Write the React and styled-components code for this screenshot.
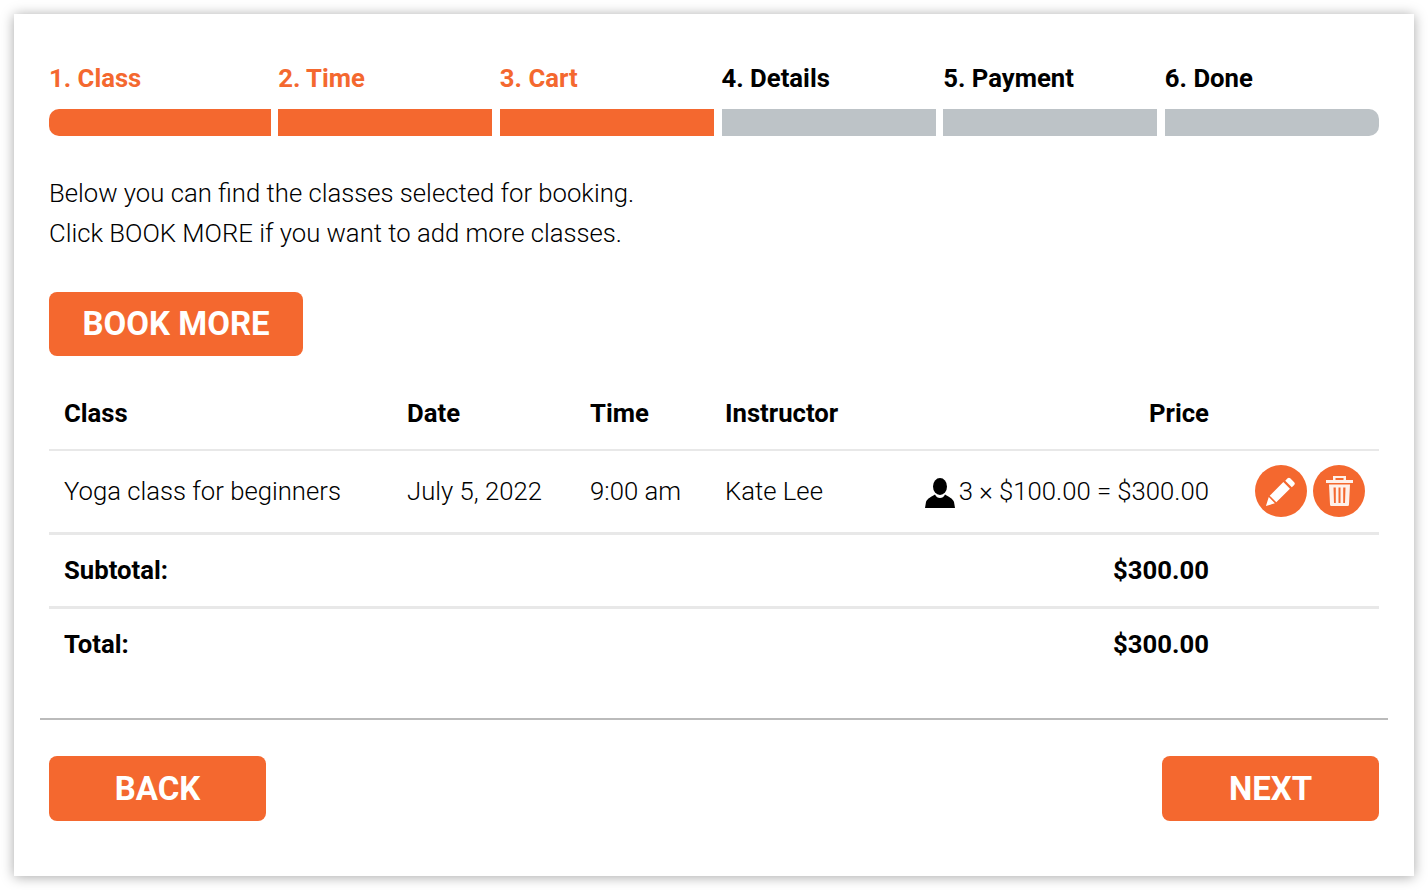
import React from "react";
import styled, { createGlobalStyle } from "styled-components";

const ORANGE = "#f4682f";

const GlobalStyle = createGlobalStyle`
  html, body {
    margin: 0;
    background: #fff;
  }
  body {
    font-family: Roboto, "Liberation Sans", sans-serif;
    color: #000;
  }
`;

const Card = styled.div`
  box-sizing: border-box;
  width: 1400px;
  height: 862px;
  margin: 14px;
  padding: 47px 35px 0;
  background: #fff;
  box-shadow: 0 1px 12px rgba(0, 0, 0, 0.35);
`;

const Steps = styled.div`
  display: grid;
  grid-template-columns: repeat(6, 1fr);
`;

const Step = styled.div`
  padding-left: ${(p) => (p.$first ? 0 : "7.5px")};
`;

const StepLabel = styled.div`
  font-size: 25.7px;
  line-height: 34px;
  font-weight: 700;
  color: ${(p) => (p.$active ? ORANGE : "#000")};
`;

const StepBar = styled.div`
  height: 27px;
  margin-top: 14px;
  background: ${(p) => (p.$active ? ORANGE : "#bdc3c7")};
  border-radius: ${(p) => (p.$first ? "10px 0 0 10px" : p.$last ? "0 10px 10px 0" : 0)};
`;

const Intro = styled.p`
  margin: 37px 0 0;
  font-size: 25.7px;
  line-height: 40px;
  font-weight: 300;
`;

const Button = styled.button`
  display: block;
  box-sizing: border-box;
  height: ${(p) => p.$height || "64px"};
  width: ${(p) => p.$width || "auto"};
  padding: 0 33.500px;
  border: 0;
  border-radius: 8px;
  background: ${ORANGE};
  color: #fff;
  font-family: inherit;
  font-size: 33px;
  font-weight: 700;
`;

const MoreButton = styled(Button)`
  margin-top: 38.500px;
`;

const Table = styled.table`
  width: 100%;
  margin-top: 21px;
  table-layout: fixed;
  border-collapse: collapse;
  font-size: 25.7px;
`;

const Row = styled.tr`
  height: ${(p) => p.$height};
  border-bottom: ${(p) => p.$border || "0"};
`;

const Head = styled.th`
  padding: 0 15px;
  font-weight: 700;
  text-align: ${(p) => p.$align || "left"};
`;

const Cell = styled.td`
  padding: 0 15px ${(p) => p.$lift || 0} 15px;
  font-weight: ${(p) => (p.$bold ? 700 : 300)};
  text-align: ${(p) => p.$align || "left"};
  white-space: nowrap;
`;

const ActionCell = styled.td`
  padding: 0 14px 0 0;
`;

const Actions = styled.div`
  display: flex;
  justify-content: flex-end;
  gap: 6px;
`;

const RoundButton = styled.div`
  flex: none;
  width: 52px;
  height: 52px;
  border-radius: 50%;
  background: ${ORANGE};
  display: flex;
  align-items: center;
  justify-content: center;
`;

const PersonIcon = styled.svg`
  width: 30px;
  height: 30px;
  margin: 0 4px -2px 0;
  vertical-align: -6px;
`;

const Divider = styled.div`
  height: 2px;
  margin: 38px -9px 0;
  background: #bbb;
`;

const Footer = styled.div`
  display: flex;
  justify-content: space-between;
  margin-top: 36px;
`;

const steps = ["1. Class", "2. Time", "3. Cart", "4. Details", "5. Payment", "6. Done"];

function App() {
  return (
    <>
      <GlobalStyle />
      <Card>
        <Steps>
          {steps.map((s, i) => (
            <Step key={s} $first={i === 0}>
              <StepLabel $active={i < 3}>{s}</StepLabel>
              <StepBar $active={i < 3} $first={i === 0} $last={i === 5} />
            </Step>
          ))}
        </Steps>
        <Intro>
          Below you can find the classes selected for booking.
          <br />
          Click BOOK MORE if you want to add more classes.
        </Intro>
        <MoreButton>BOOK MORE</MoreButton>
        <Table>
          <colgroup>
            <col width="343" />
            <col width="183" />
            <col width="135" />
            <col width="150" />
            <col width="364" />
            <col width="155" />
          </colgroup>
          <thead>
            <Row $height="73px" $border="2px solid #e8e8e8">
              <Head>Class</Head>
              <Head>Date</Head>
              <Head>Time</Head>
              <Head>Instructor</Head>
              <Head $align="right">Price</Head>
              <Head />
            </Row>
          </thead>
          <tbody>
            <Row $height="84px" $border="3px solid #e8e8e8">
              <Cell $lift="1px">Yoga class for beginners</Cell>
              <Cell $lift="1px">July 5, 2022</Cell>
              <Cell $lift="1px">9:00 am</Cell>
              <Cell $lift="1px">Kate Lee</Cell>
              <Cell $lift="1px" $align="right">
                <PersonIcon viewBox="0 0 30 30">
                  <ellipse cx="15" cy="8.500" rx="7" ry="8.500" fill="#000" />
                  <path
                    d="M0 30l1-6c1-3.500 6-5.500 9-7.500 1 2.500 3 3.500 5 3.500s4-1 5-3.500c3 2 8 4 9 7.500l1 6z"
                    fill="#000"
                  />
                </PersonIcon>
                3 × $100.00 = $300.00
              </Cell>
              <ActionCell>
                <Actions>
                  <RoundButton>
                    <svg width="32" height="32" viewBox="0 0 34 34">
                      <path d="M24 3.500a2 2 0 0 1 2.800 0l4.200 4.200a2 2 0 0 1 0 2.800l-2.500 2.500-7-7z M19.500 7.500l7 7L12 29l-7-7z M4 23.500l6.500 6.500L1 33z" fill="#fff" />
                    </svg>
                  </RoundButton>
                  <RoundButton>
                    <svg width="27" height="30" viewBox="0 0 27 30" fill="#fff">
                      <path d="M7 4V0h13v4h7v3H0V4zM9.500 2v2h8V2z" fillRule="evenodd" opacity="0.9" />
                      <path d="M3 8.500h21l-1 20a1.500 1.500 0 0 1-1.500 1.500h-16.500A1.500 1.500 0 0 1 4 28.500zM7.500 11.500l.5 15.500h1.800V11.500zm5 0V27h2V11.500zm4.700 0V27H19l.5-15.500z" fillRule="evenodd" opacity="0.9" />
                    </svg>
                  </RoundButton>
                </Actions>
              </ActionCell>
            </Row>
            <Row $height="74px" $border="3px solid #e8e8e8">
              <Cell $bold $lift="2px" colSpan={4}>Subtotal:</Cell>
              <Cell $bold $lift="2px" $align="right">$300.00</Cell>
              <Cell />
            </Row>
            <Row $height="72px">
              <Cell $bold colSpan={4}>Total:</Cell>
              <Cell $bold $align="right">$300.00</Cell>
              <Cell />
            </Row>
          </tbody>
        </Table>
        <Divider />
        <Footer>
          <Button $height="65px" $width="217px">BACK</Button>
          <Button $height="65px" $width="217px">NEXT</Button>
        </Footer>
      </Card>
    </>
  );
}

export default App;
